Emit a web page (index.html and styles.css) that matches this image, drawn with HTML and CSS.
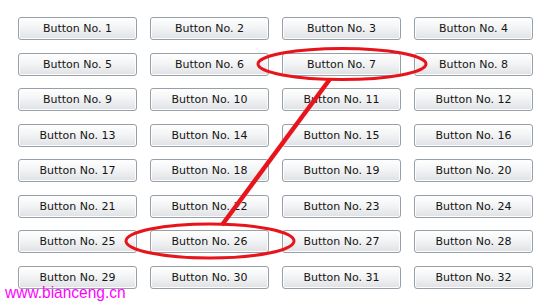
FILE: index.html
```html
<!DOCTYPE html>
<html>
<head>
  <meta charset="UTF-8" />
  <title>Buttons</title>
  <link rel="stylesheet" href="styles.css">
</head>
<body>
  <div class="page">
    <div class="grid">
      <button class="btn">Button No. 1</button>
      <button class="btn">Button No. 2</button>
      <button class="btn">Button No. 3</button>
      <button class="btn">Button No. 4</button>
      <button class="btn">Button No. 5</button>
      <button class="btn">Button No. 6</button>
      <button class="btn">Button No. 7</button>
      <button class="btn">Button No. 8</button>
      <button class="btn">Button No. 9</button>
      <button class="btn">Button No. 10</button>
      <button class="btn">Button No. 11</button>
      <button class="btn">Button No. 12</button>
      <button class="btn">Button No. 13</button>
      <button class="btn">Button No. 14</button>
      <button class="btn">Button No. 15</button>
      <button class="btn">Button No. 16</button>
      <button class="btn">Button No. 17</button>
      <button class="btn">Button No. 18</button>
      <button class="btn">Button No. 19</button>
      <button class="btn">Button No. 20</button>
      <button class="btn">Button No. 21</button>
      <button class="btn">Button No. 22</button>
      <button class="btn">Button No. 23</button>
      <button class="btn">Button No. 24</button>
      <button class="btn">Button No. 25</button>
      <button class="btn">Button No. 26</button>
      <button class="btn">Button No. 27</button>
      <button class="btn">Button No. 28</button>
      <button class="btn">Button No. 29</button>
      <button class="btn">Button No. 30</button>
      <button class="btn">Button No. 31</button>
      <button class="btn">Button No. 32</button>
    </div>
    <!-- red marks drawn over the buttons -->
    <svg class="marks" width="550" height="306" viewBox="0 0 550 306">
      <ellipse cx="342" cy="64" rx="84" ry="15.5" fill="none" stroke="#e8141c" stroke-width="3"/>
      <ellipse cx="210" cy="241" rx="84" ry="17" fill="none" stroke="#e8141c" stroke-width="3"/>
      <line x1="330" y1="79" x2="222" y2="225" stroke="#e8141c" stroke-width="4.5"/>
    </svg>
    <div class="watermark">www.bianceng.cn</div>
  </div>
</body>
</html>
```

FILE: styles.css
```css
* {
  box-sizing: border-box;
}
body {
  margin: 0;
  background: #fff;
  font-family: "DejaVu Sans", Verdana, sans-serif;
}
.page {
  position: relative;
  width: 550px;
  height: 306px;
  overflow: hidden;
}
.grid {
  display: grid;
  grid-template-columns: repeat(4, 119px);
  grid-auto-rows: 23px;
  column-gap: 13px;
  row-gap: 12.5px;
  padding: 17px 0 0 18px;
}
.btn {
  margin: 0;
  padding: 0;
  font-family: "DejaVu Sans", Verdana, sans-serif;
  font-size: 11px;
  color: #141414;
  background: linear-gradient(#ffffff, #f3f4f5 45%, #dfe1e4);
  border: 1px solid #979fa8;
  border-radius: 3px;
  box-shadow: inset 0 0 0 1px #fdfdfd;
  cursor: pointer;
}
.marks {
  position: absolute;
  top: 0;
  left: 0;
}
.watermark {
  position: absolute;
  left: 5px;
  top: 288px;
  font-family: "Liberation Sans", Arial, sans-serif;
  font-size: 15.5px;
  line-height: 10px;
  color: #ff00ff;
  transform: scaleY(1.12);
  transform-origin: 0 100%;
}
```
